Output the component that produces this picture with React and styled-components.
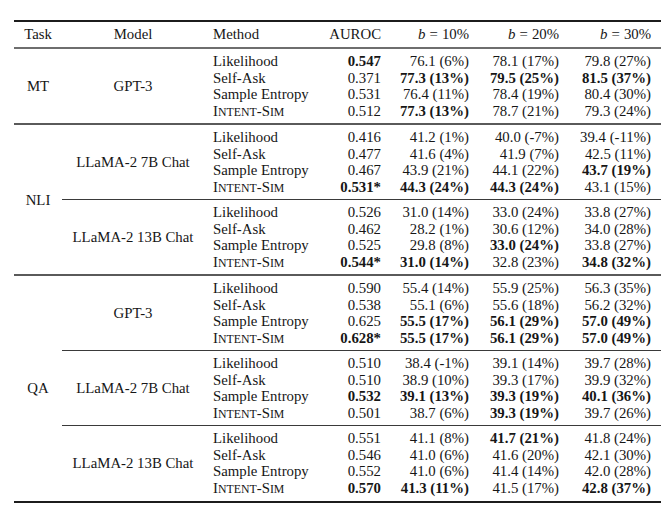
import React from "react";
import styled, { createGlobalStyle } from "styled-components";

const GlobalStyle = createGlobalStyle`
  html, body {
    margin: 0;
    padding: 0;
    background: #fff;
  }
  body {
    font-family: "Liberation Serif", "Times New Roman", serif;
    color: #161616;
  }
`;

// "!" in front of a value means it is printed bold
const groups = [
  {
    task: "MT",
    models: [
      {
        name: "GPT-3",
        rows: [
          ["Likelihood", "!0.547", "76.1 (6%)", "78.1 (17%)", "79.8 (27%)"],
          ["Self-Ask", "0.371", "!77.3 (13%)", "!79.5 (25%)", "!81.5 (37%)"],
          ["Sample Entropy", "0.531", "76.4 (11%)", "78.4 (19%)", "80.4 (30%)"],
          ["Intent-Sim", "0.512", "!77.3 (13%)", "78.7 (21%)", "79.3 (24%)"],
        ],
      },
    ],
  },
  {
    task: "NLI",
    models: [
      {
        name: "LLaMA-2 7B Chat",
        rows: [
          ["Likelihood", "0.416", "41.2 (1%)", "40.0 (-7%)", "39.4 (-11%)"],
          ["Self-Ask", "0.477", "41.6 (4%)", "41.9 (7%)", "42.5 (11%)"],
          ["Sample Entropy", "0.467", "43.9 (21%)", "44.1 (22%)", "!43.7 (19%)"],
          ["Intent-Sim", "!0.531*", "!44.3 (24%)", "!44.3 (24%)", "43.1 (15%)"],
        ],
      },
      {
        name: "LLaMA-2 13B Chat",
        rows: [
          ["Likelihood", "0.526", "31.0 (14%)", "33.0 (24%)", "33.8 (27%)"],
          ["Self-Ask", "0.462", "28.2 (1%)", "30.6 (12%)", "34.0 (28%)"],
          ["Sample Entropy", "0.525", "29.8 (8%)", "!33.0 (24%)", "33.8 (27%)"],
          ["Intent-Sim", "!0.544*", "!31.0 (14%)", "32.8 (23%)", "!34.8 (32%)"],
        ],
      },
    ],
  },
  {
    task: "QA",
    models: [
      {
        name: "GPT-3",
        rows: [
          ["Likelihood", "0.590", "55.4 (14%)", "55.9 (25%)", "56.3 (35%)"],
          ["Self-Ask", "0.538", "55.1 (6%)", "55.6 (18%)", "56.2 (32%)"],
          ["Sample Entropy", "0.625", "!55.5 (17%)", "!56.1 (29%)", "!57.0 (49%)"],
          ["Intent-Sim", "!0.628*", "!55.5 (17%)", "!56.1 (29%)", "!57.0 (49%)"],
        ],
      },
      {
        name: "LLaMA-2 7B Chat",
        rows: [
          ["Likelihood", "0.510", "38.4 (-1%)", "39.1 (14%)", "39.7 (28%)"],
          ["Self-Ask", "0.510", "38.9 (10%)", "39.3 (17%)", "39.9 (32%)"],
          ["Sample Entropy", "!0.532", "!39.1 (13%)", "!39.3 (19%)", "!40.1 (36%)"],
          ["Intent-Sim", "0.501", "38.7 (6%)", "!39.3 (19%)", "39.7 (26%)"],
        ],
      },
      {
        name: "LLaMA-2 13B Chat",
        rows: [
          ["Likelihood", "0.551", "41.1 (8%)", "!41.7 (21%)", "41.8 (24%)"],
          ["Self-Ask", "0.546", "41.0 (6%)", "41.6 (20%)", "42.1 (30%)"],
          ["Sample Entropy", "0.552", "41.0 (6%)", "41.4 (14%)", "42.0 (28%)"],
          ["Intent-Sim", "!0.570", "!41.3 (11%)", "41.5 (17%)", "!42.8 (37%)"],
        ],
      },
    ],
  },
];

const widths = [48, 142, 118, 67, 89, 90, 93];

const Page = styled.div`
  padding: 20px 0 0 14px;
`;

const Table = styled.table`
  width: 647px;
  table-layout: fixed;
  border-collapse: collapse;
  font-size: 14.8px;
  line-height: 16.4px;
  border-top: 2px solid #1c1c1c;
  border-bottom: 2px solid #1c1c1c;
`;

const Head = styled.thead`
  border-bottom: 2px solid #6e6e6e;
`;

const Th = styled.th`
  font-weight: normal;
  padding: 4px 0 5px;
  text-align: ${(p) => p.$align || "right"};
  padding-left: ${(p) => (p.$align === "left" ? "9px" : "0")};
  padding-right: ${(p) => p.$pr || 0}px;
  white-space: nowrap;
`;

const Group = styled.tbody`
  border-top: 2px solid #5a5a5a;
`;

const Row = styled.tr``;

const Cell = styled.td`
  padding: ${(p) => (p.$first ? 4 : 0)}px ${(p) => p.$pr || 0}px
    ${(p) => (p.$last ? 3.4 : 0)}px ${(p) => p.$pl || 0}px;
  text-align: ${(p) => p.$align || "right"};
  vertical-align: middle;
  white-space: nowrap;
  font-weight: ${(p) => (p.$bold ? "bold" : "normal")};
  border-top: ${(p) => (p.$rule ? "1px solid #3a3a3a" : "none")};
`;

const Sc = styled.span`
  font-size: 0.8em;
  text-transform: uppercase;
`;

const MathB = styled.i`
  margin-right: 4px;
`;

const Eq = styled.span`
  margin-right: 4px;
`;

const valuePr = [9, 9, 9, 10];

function MethodName({ name }) {
  if (name === "Intent-Sim")
    return (
      <>
        I<Sc>ntent</Sc>-S<Sc>im</Sc>
      </>
    );
  return name;
}

function Value({ v, first, last, rule, pr }) {
  const bold = v.startsWith("!");
  return (
    <Cell $first={first} $last={last} $rule={rule} $pr={pr} $bold={bold}>
      {bold ? v.slice(1) : v}
    </Cell>
  );
}

export default function App() {
  return (
    <Page>
      <GlobalStyle />
      <Table>
        <colgroup>
          {widths.map((w, i) => (
            <col key={i} style={{ width: w }} />
          ))}
        </colgroup>
        <Head>
          <tr>
            <Th $align="center">Task</Th>
            <Th $align="center">Model</Th>
            <Th $align="left">Method</Th>
            <Th $pr={8}>AUROC</Th>
            {["10%", "20%", "30%"].map((b, i) => (
              <Th key={b} $pr={valuePr[i + 1]}>
                <MathB>b</MathB>
                <Eq>=</Eq>
                {b}
              </Th>
            ))}
          </tr>
        </Head>
        {groups.map((g) => {
          const total = g.models.length * 4;
          return (
            <Group key={g.task}>
              {g.models.map((m, mi) =>
                m.rows.map((r, ri) => {
                  const first = ri === 0;
                  const last = ri === 3;
                  const rule = first && mi > 0;
                  return (
                    <Row key={m.name + r[0]}>
                      {mi === 0 && ri === 0 && (
                        <Cell rowSpan={total} $align="center">
                          {g.task}
                        </Cell>
                      )}
                      {first && (
                        <Cell rowSpan={4} $align="center" $rule={rule}>
                          {m.name}
                        </Cell>
                      )}
                      <Cell
                        $align="left"
                        $pl={9}
                        $first={first}
                        $last={last}
                        $rule={rule}
                      >
                        <MethodName name={r[0]} />
                      </Cell>
                      {r.slice(1).map((v, vi) => (
                        <Value
                          key={vi}
                          v={v}
                          first={first}
                          last={last}
                          rule={rule}
                          pr={vi === 0 ? 8 : valuePr[vi]}
                        />
                      ))}
                    </Row>
                  );
                })
              )}
            </Group>
          );
        })}
      </Table>
    </Page>
  );
}
